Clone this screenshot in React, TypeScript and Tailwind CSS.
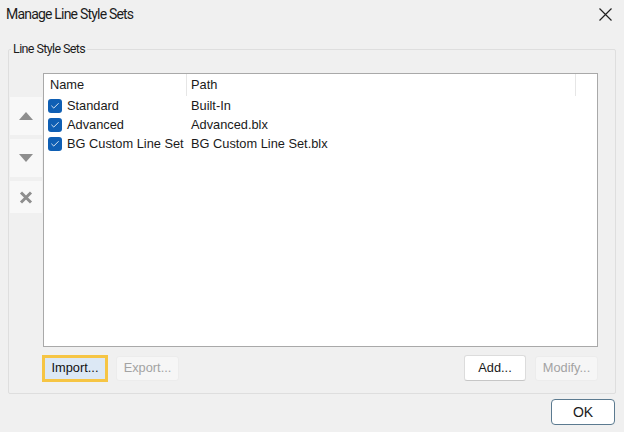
import { Check } from 'lucide-react'

const rows = [
  { name: 'Standard', path: 'Built-In' },
  { name: 'Advanced', path: 'Advanced.blx' },
  { name: 'BG Custom Line Set', path: 'BG Custom Line Set.blx' },
]

const SideButton = ({ children, h }: { children: React.ReactNode; h: string }) => (
  <div className={`w-[32px] ${h} bg-[#f8f8f8] flex items-center justify-center`}>{children}</div>
)

export default function App() {
  return (
    <div className="w-[624px] h-[432px] bg-[#f0f0f0] font-['Liberation_Sans',Arial,sans-serif] text-[12.8px] text-[#1a1a1a] flex flex-col overflow-hidden">
      {/* Title bar */}
      <div className="h-[29px] flex items-center justify-between pl-[6px] pr-[12px]">
        <span className="font-['Roboto',sans-serif] text-[14px] tracking-[-0.8px] text-[#1c1c1c]">
          Manage Line Style Sets
        </span>
        <svg width="13" height="13" viewBox="0 0 13 13">
          <path d="M0.5 0.5 12.5 12.5 M12.5 0.5 0.5 12.5" stroke="#222" strokeWidth="1.2" fill="none" />
        </svg>
      </div>

      {/* Group box */}
      <fieldset className="mx-[8px] mt-[12px] border border-[#dedede] rounded-[2px] pl-[1px] pr-[17px] pb-[12px]">
        <legend className="ml-[1px] px-[2px] leading-[16px] font-['Roboto',sans-serif] text-[12.5px] tracking-[-0.6px] text-[#1c1c1c]">
          Line Style Sets
        </legend>
        <div className="pt-[16px] flex">
          {/* Move / delete buttons */}
          <div className="mt-[24px] flex flex-col gap-[4px]">
            <SideButton h="h-[38px]">
              <svg width="14" height="8" viewBox="0 0 14 8">
                <polygon points="7,0 14,8 0,8" fill="#8e8e8e" />
              </svg>
            </SideButton>
            <SideButton h="h-[38px]">
              <svg width="14" height="8" viewBox="0 0 14 8">
                <polygon points="0,0 14,0 7,8" fill="#8e8e8e" />
              </svg>
            </SideButton>
            <SideButton h="h-[32px]">
              <svg width="14" height="13" viewBox="0 0 14 13">
                <path d="M2 1.5 12 11.5 M12 1.5 2 11.5" stroke="#8e8e8e" strokeWidth="3" fill="none" />
              </svg>
            </SideButton>
          </div>

          <div className="ml-[1px] flex-1 flex flex-col">
            {/* List view */}
            <div className="h-[274px] bg-white border border-[#a9a9a9]">
              <div className="h-[22px] flex">
                <div className="w-[143px] pl-[6px] flex items-center border-r border-[#e6e6e6]">Name</div>
                <div className="w-[389px] pl-[4px] flex items-center border-r border-[#e6e6e6]">Path</div>
              </div>
              {rows.map((r) => (
                <div key={r.name} className="h-[19px] flex items-center">
                  <div className="w-[143px] pl-[4px] flex items-center gap-[5px]">
                    <span className="w-[14px] h-[14px] rounded-[3px] bg-[#0f5fb4] flex items-center justify-center">
                      <Check className="w-[10px] h-[10px] text-white" strokeWidth={2} />
                    </span>
                    <span className="whitespace-nowrap">{r.name}</span>
                  </div>
                  <div className="pl-[4px] whitespace-nowrap">{r.path}</div>
                </div>
              ))}
            </div>

            {/* Buttons */}
            <div className="mt-[8px] h-[26px] flex items-center">
              <button className="-ml-[1px] w-[66px] h-[27px] border-[3px] border-[#f6c544] bg-[#dce8f5] text-[#111]">
                Import...
              </button>
              <button className="ml-[8px] w-[63px] h-[25px] bg-[#f6f6f6] border border-[#ececec] rounded-[3px] text-[#a3a3a3]">
                Export...
              </button>
              <div className="flex-1" />
              <button className="w-[62px] h-[26px] bg-white border border-[#dcdcdc] border-b-[#c6c6c6] rounded-[3px]">
                Add...
              </button>
              <button className="ml-[9px] w-[63px] h-[25px] bg-[#f6f6f6] border border-[#ececec] rounded-[3px] text-[#a3a3a3]">
                Modify...
              </button>
            </div>
          </div>
        </div>
      </fieldset>

      <div className="mt-[5px] pr-[9px] flex justify-end">
        <button className="w-[64px] h-[26px] bg-white border border-[#5b7a90] rounded-[4px] text-[14px]">OK</button>
      </div>
    </div>
  )
}
